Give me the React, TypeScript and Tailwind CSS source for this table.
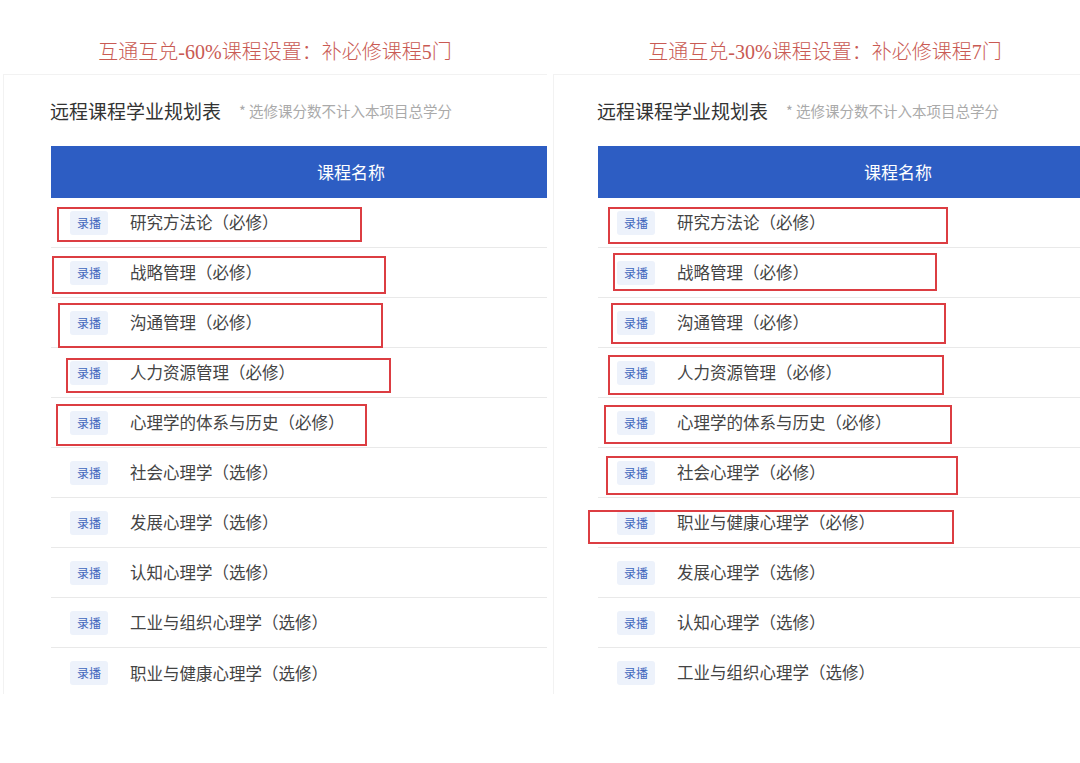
import React from 'react';

type Box = { x: number; y: number; w: number; h: number };

interface PlanProps {
    title: string;
    courses: string[];
    boxes: Box[];
    tableLeft: string;
    lastLine: boolean;
}

const cjk = { fontFamily: '"Noto Sans CJK SC", "Noto Sans", sans-serif' };
const serif = { fontFamily: '"Liberation Serif", "Noto Sans CJK SC", serif' };

function Plan({ title, courses, boxes, tableLeft, lastLine }: PlanProps) {
    return (
        <div className="w-[550px] shrink-0">
            <div className="pt-[38px] mb-[8px] h-[66px] flex justify-center">
                <h1 className="text-[20px] leading-[28px] text-[#c95a53] font-light" style={serif}>{title}</h1>
            </div>
            <div className={`mx-[3px] h-[620px] border-l border-t border-[#f2f2f2] bg-white overflow-hidden ${tableLeft}`} style={cjk}>
                <div className="pt-[26px] mb-[25px] flex items-center h-[46px] -ml-[1px]">
                    <span className="text-[19px] leading-[20px] text-[#333]">远程课程学业规划表</span>
                    <span className="ml-[18px] text-[14.5px] leading-[20px] text-[#aaa]">* 选修课分数不计入本项目总学分</span>
                </div>
                <div className="w-[600px]">
                    <div className="h-[52px] bg-[#2d5dc3] flex items-center justify-center text-white text-[17px]">课程名称</div>
                    <div className="relative">
                        {courses.map((c, i) => (
                            <div key={i} className={`h-[50px] flex items-center pl-[19px] ${i < courses.length - 1 || lastLine ? 'border-b border-[#e9e9e9]' : ''}`}>
                                <span className="w-[38px] h-[24px] rounded-[3px] bg-[#edf2fb] text-[#3f66bd] text-[12px] flex items-center justify-center">录播</span>
                                <span className="ml-[22px] text-[16.5px] text-[#444]">{c}</span>
                            </div>
                        ))}
                        {boxes.map((b, i) => (
                            <div
                                key={'b' + i}
                                className="absolute border-2 border-[#dc3d42]"
                                style={{ left: b.x, top: b.y, width: b.w, height: b.h }}
                            />
                        ))}
                    </div>
                </div>
            </div>
        </div>
    );
}

export default function App() {
    const left = [
        '研究方法论（必修）',
        '战略管理（必修）',
        '沟通管理（必修）',
        '人力资源管理（必修）',
        '心理学的体系与历史（必修）',
        '社会心理学（选修）',
        '发展心理学（选修）',
        '认知心理学（选修）',
        '工业与组织心理学（选修）',
        '职业与健康心理学（选修）',
    ];
    const right = [
        '研究方法论（必修）',
        '战略管理（必修）',
        '沟通管理（必修）',
        '人力资源管理（必修）',
        '心理学的体系与历史（必修）',
        '社会心理学（必修）',
        '职业与健康心理学（必修）',
        '发展心理学（选修）',
        '认知心理学（选修）',
        '工业与组织心理学（选修）',
    ];
    const leftBoxes: Box[] = [
        { x: 6, y: 9, w: 305, h: 35 },
        { x: 1, y: 58, w: 334, h: 38 },
        { x: 7, y: 105, w: 325, h: 45 },
        { x: 15, y: 160, w: 325, h: 35 },
        { x: 5, y: 206, w: 311, h: 42 },
    ];
    const rightBoxes: Box[] = [
        { x: 10, y: 9, w: 340, h: 37 },
        { x: 15, y: 55, w: 324, h: 38 },
        { x: 13, y: 105, w: 335, h: 41 },
        { x: 10, y: 157, w: 336, h: 40 },
        { x: 6, y: 207, w: 348, h: 39 },
        { x: 8, y: 258, w: 352, h: 39 },
        { x: -10, y: 312, w: 366, h: 34 },
    ];

    return (
        <div className="w-[1080px] h-[763px] bg-white overflow-hidden flex">
            <Plan title="互通互兑-60%课程设置：补必修课程5门" courses={left} boxes={leftBoxes} tableLeft="pl-[47px]" lastLine={false} />
            <Plan title="互通互兑-30%课程设置：补必修课程7门" courses={right} boxes={rightBoxes} tableLeft="pl-[44px]" lastLine={true} />
        </div>
    );
}
